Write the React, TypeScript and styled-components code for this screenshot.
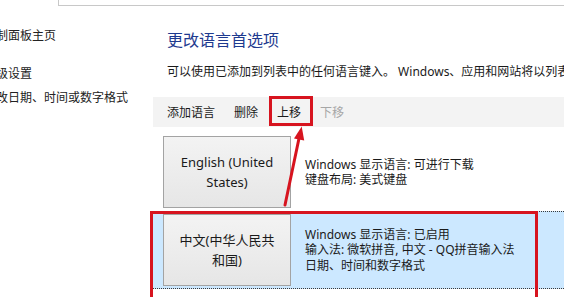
import React from 'react';
import styled, { createGlobalStyle } from 'styled-components';

const GlobalStyle = createGlobalStyle`
  html, body {
    margin: 0;
    padding: 0;
    background: #ffffff;
    overflow: hidden;
  }
  body {
    font-family: "Noto Sans", "Noto Sans CJK SC", sans-serif;
    color: #1a1a1a;
  }
`;

const RED = '#d7141f';

interface ILanguage {
  name: string;
  details: string[];
  selected?: boolean;
}

const languages: ILanguage[] = [
  {
    name: 'English (United States)',
    details: ['Windows 显示语言: 可进行下载', '键盘布局: 美式键盘'],
  },
  {
    name: '中文(中华人民共和国)',
    details: ['Windows 显示语言: 已启用', '输入法: 微软拼音, 中文 - QQ拼音输入法', '日期、时间和数字格式'],
    selected: true,
  },
];

const tools = [
  { label: '添加语言' },
  { label: '删除' },
  { label: '上移', marked: true },
  { label: '下移', disabled: true },
];

const App = () => {
  return (
    <>
      <GlobalStyle />
      <Page>
        <Header>
          <SearchBox />
        </Header>
        <Body>
          <Sidebar>
            <SideLink>控制面板主页</SideLink>
            <SideLink $gap={22}>高级设置</SideLink>
            <SideLink $gap={8}>更改日期、时间或数字格式</SideLink>
          </Sidebar>
          <Main>
            <Title>更改语言首选项</Title>
            <Description>
              可以使用已添加到列表中的任何语言键入。 Windows、应用和网站将以列表中受支持的第一种语言显示。
            </Description>
            <Toolbar>
              {tools.map((t) => (
                <ToolButton key={t.label} $disabled={t.disabled} $marked={t.marked}>
                  {t.label}
                </ToolButton>
              ))}
            </Toolbar>
            <LanguageList>
              {languages.map((lang) => (
                <LanguageRow key={lang.name} $selected={lang.selected}>
                  <LanguageButton>{lang.name}</LanguageButton>
                  <Details>
                    {lang.details.map((d) => (
                      <DetailLine key={d}>{d}</DetailLine>
                    ))}
                  </Details>
                </LanguageRow>
              ))}
            </LanguageList>
          </Main>
        </Body>
        <HighlightBox />
        <Arrow width="564" height="297" viewBox="0 0 564 297">
          <line x1="285" y1="205" x2="299.5" y2="136" stroke={RED} strokeWidth="3" strokeLinecap="round" />
          <polygon points="301.7,126.5 304.2,140.6 294,138.4" fill={RED} />
        </Arrow>
      </Page>
    </>
  );
};

const Page = styled.div`
  position: relative;
  width: 564px;
  height: 297px;
  overflow: hidden;
  display: flex;
  flex-direction: column;
`;

const Header = styled.div`
  height: 6px;
  display: flex;
`;

const SearchBox = styled.div`
  margin-left: 58px;
  flex: 1;
  border-left: 1px solid #c8c8c8;
  border-bottom: 1px solid #c8c8c8;
`;

const Body = styled.div`
  flex: 1;
  display: grid;
  grid-template-columns: 153px 1fr;
`;

const Sidebar = styled.nav`
  display: flex;
  flex-direction: column;
  padding-top: 21px;
  margin-left: -16px;
`;

const SideLink = styled.div<{ $gap?: number }>`
  font-family: "Noto Sans CJK SC", sans-serif;
  font-size: 12px;
  line-height: 16px;
  color: #222;
  white-space: nowrap;
  margin-top: ${(p) => p.$gap ?? 0}px;
`;

const Main = styled.div`
  display: flex;
  flex-direction: column;
  min-width: 0;
`;

const Title = styled.h1`
  margin: 23px 0 0;
  padding-left: 14px;
  font-family: "Noto Sans CJK SC", sans-serif;
  font-size: 16px;
  line-height: 20px;
  font-weight: normal;
  color: #1e3a8f;
  white-space: nowrap;
`;

const Description = styled.p`
  margin: 15px 0 0;
  padding-left: 14px;
  font-size: 12px;
  line-height: 16px;
  white-space: nowrap;
  color: #1a1a1a;
`;

const Toolbar = styled.div`
  margin-top: 17px;
  height: 30px;
  background: #f3f3f3;
  display: flex;
  align-items: center;
  gap: 19px;
  padding-left: 14px;
`;

const ToolButton = styled.span<{ $disabled?: boolean; $marked?: boolean }>`
  position: relative;
  font-family: "Noto Sans CJK SC", sans-serif;
  font-size: 12px;
  line-height: 16px;
  color: ${(p) => (p.$disabled ? '#a6a6a6' : '#1a1a1a')};

  ${(p) =>
    p.$marked &&
    `
    &::after {
      content: '';
      position: absolute;
      left: -8px;
      right: -12px;
      top: -8px;
      bottom: -6px;
      border: 3px solid ${RED};
    }
  `}
`;

const LanguageList = styled.div`
  margin-top: 6px;
  display: flex;
  flex-direction: column;
`;

const LanguageRow = styled.div<{ $selected?: boolean }>`
  display: flex;
  align-items: center;
  padding: 2px 0 2px 10px;
  border: 1px dotted ${(p) => (p.$selected ? '#3a3a3a' : 'transparent')};
  border-right: none;
  margin-left: -1px;
  background: ${(p) => (p.$selected ? '#cce8ff' : 'transparent')};
`;

const LanguageButton = styled.div`
  box-sizing: border-box;
  width: 128px;
  height: 72px;
  flex-shrink: 0;
  display: flex;
  align-items: center;
  justify-content: center;
  text-align: center;
  padding: 0 14px;
  font-family: "Noto Sans", "Noto Sans CJK SC", sans-serif;
  font-size: 13px;
  line-height: 20px;
  color: #1a1a1a;
  background: linear-gradient(#f3f3f3, #e6e6e6);
  border: 1px solid #a3a3a3;
`;

const Details = styled.div`
  margin-left: 14px;
  display: flex;
  flex-direction: column;
`;

const DetailLine = styled.div`
  font-size: 12px;
  line-height: 15.5px;
  white-space: nowrap;
  color: #1a1a1a;
`;

const HighlightBox = styled.div`
  position: absolute;
  left: 150px;
  top: 211px;
  width: 388px;
  height: 90px;
  box-sizing: border-box;
  border: 3px solid ${RED};
  pointer-events: none;
`;

const Arrow = styled.svg`
  position: absolute;
  left: 0;
  top: 0;
  pointer-events: none;
`;

export default App;
